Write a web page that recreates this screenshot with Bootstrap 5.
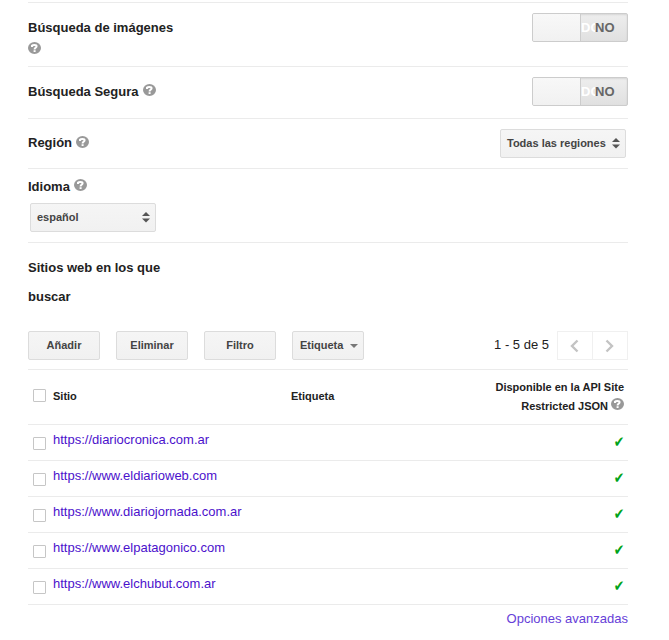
<!DOCTYPE html>
<html lang="es">
<head>
<meta charset="utf-8">
<meta name="viewport" content="width=device-width, initial-scale=1">
<title>Configuración del buscador</title>
<link href="https://cdn.jsdelivr.net/npm/bootstrap@5.3.0/dist/css/bootstrap.min.css" rel="stylesheet">
<style>
body{font-family:"Liberation Sans",Arial,sans-serif;font-size:13px;line-height:20px;color:#222;background:#fff;overflow:hidden}
.panel{width:600px;margin-left:28px;padding-top:2px}
.line{border-top:1px solid #ebebeb}
.s1{height:64px}.s2{height:52px}.s3{height:50px}.s4{height:74px}.s5{height:127px}.thead-row{height:55px;font-size:11px;font-weight:700}.site{height:36px}
.help{width:13px;height:12px;display:block;flex:none}
.s1 .help{margin-top:4px}.s2 .help{margin-top:17px}.s3 .help{margin-top:17px}.s4 .help{margin-top:2px}
.lbl{font-weight:700;white-space:nowrap}
.s1 .lbl{padding-top:15px}.s2 .lbl{padding-top:15px}.s3 .lbl{padding-top:14px}
.switch{width:96px;height:29px;border:1px solid #ccc;border-radius:2px;background:linear-gradient(#eee,#e0e0e0);box-shadow:inset 0 1px 2px rgba(0,0,0,.1);font-weight:700;line-height:28px;margin-top:10px;overflow:hidden}
.knob{width:48px;border-right:1px solid #ccc;background:linear-gradient(#f8f8f8,#f1f1f1);flex:none}
.hid{color:#fff;width:14px;overflow:hidden;white-space:nowrap;flex:none}
.off{color:#666}
.gbtn{height:29px;border:1px solid #dcdcdc;border-radius:2px;background:linear-gradient(#f5f5f5,#f1f1f1);color:#444;font-size:11px;font-weight:700;line-height:27px;padding:0;width:72px}
.gbtn:hover{color:#444;background:#f1f1f1;border-color:#dcdcdc}
.caret{margin:1px 5px 0 auto}
.drop{padding-left:7px}
.sel{width:126px;padding:0 5px 0 6px}
.sel svg{margin-bottom:1px}
.s3 .sel{margin:10px 2px 0 0}
.s4 .sel{margin:6px 0 0 2px}
.gap-btn{gap:16px}
.bar{margin-top:20px}
.box{width:13px;height:13px;border:1px solid #c6c6c6;border-radius:1px;background:#fff;flex:none;margin:0 7px 0 5px;appearance:none}
.thead-row .box{margin-top:-1px}
.thead-row .pb-cell{padding-bottom:2px}
.site .box{margin-top:12px}
.site a{color:#4b11cc;text-decoration:none;line-height:15px;margin-top:7px}
.tick{color:#00a31a;font-family:"DejaVu Sans",sans-serif;font-size:12px;line-height:15px;margin:11px 4px 0 0;transform:scale(1.05,1.3)}
.api{line-height:19px;padding:8px 4px 0 0}
.api .help{margin:1px 0 0 3px}
.pg{width:36px;height:29px;border:1px solid #f0f0f0;background:#fff;padding:0 2px 0 0}
.pg+.pg{margin-left:-1px}
.count{line-height:28px}
.adv{color:#6640d8;text-decoration:none;line-height:15px;padding-top:6px}
.c1{width:263px}
.tall{line-height:29px;padding-top:10px}
</style>
<script src="https://cdn.jsdelivr.net/npm/bootstrap@5.3.0/dist/js/bootstrap.bundle.min.js"></script>
</head>
<body>
<svg width="0" height="0" class="position-absolute"><defs>
<symbol id="q" viewBox="0 0 13 12"><ellipse cx="6.5" cy="6" rx="6.5" ry="6" fill="#999"/><path d="M4 4.9V3.7Q4.6 2.9 6.5 2.9Q8.6 2.9 8.6 4.3Q8.6 5.2 7.5 5.8Q6.6 6.3 6.6 7.5" fill="none" stroke="#fff" stroke-width="2"/><path d="M5.6 8.2h2v1.8h-2z" fill="#fff"/></symbol>
<symbol id="ud" viewBox="0 0 8 12"><path d="M0 5 4 1 8 5zM0 7.5h8L4 11.5z" fill="#555"/></symbol>
</defs></svg>
<main class="panel">
<section class="line s1 d-flex justify-content-between">
 <div><div class="lbl">Búsqueda de imágenes</div><svg class="help"><use href="#q"/></svg></div>
 <div class="switch d-flex"><span class="knob"></span><span class="hid">DO</span><span class="off">NO</span></div>
</section>
<section class="line s2 d-flex justify-content-between">
 <div class="d-flex gap-1"><span class="lbl">Búsqueda Segura</span><svg class="help"><use href="#q"/></svg></div>
 <div class="switch d-flex"><span class="knob"></span><span class="hid">DO</span><span class="off">NO</span></div>
</section>
<section class="line s3 d-flex justify-content-between">
 <div class="d-flex gap-1"><span class="lbl">Región</span><svg class="help"><use href="#q"/></svg></div>
 <button class="btn gbtn sel d-flex align-items-center justify-content-between">Todas las regiones<svg width="8" height="12"><use href="#ud"/></svg></button>
</section>
<section class="line s4">
 <div class="d-flex gap-1 pt-2"><span class="lbl">Idioma</span><svg class="help"><use href="#q"/></svg></div>
 <button class="btn gbtn sel d-flex align-items-center justify-content-between">español<svg width="8" height="12"><use href="#ud"/></svg></button>
</section>
<section class="line s5 d-flex flex-column">
 <div class="lbl tall">Sitios web en los que<br>buscar</div>
 <div class="bar d-flex justify-content-between">
  <div class="d-flex gap-btn"><button class="btn gbtn">Añadir</button><button class="btn gbtn">Eliminar</button><button class="btn gbtn">Filtro</button><button class="btn gbtn d-flex align-items-center drop">Etiqueta<svg width="8" height="4" class="caret"><path d="M0 0h8L4 4z" fill="#777"/></svg></button></div>
  <div class="d-flex"><span class="me-2 count">1 - 5 de 5</span>
  <button class="pg d-flex align-items-center justify-content-center"><svg width="9" height="14" fill="none" stroke="#c3c3c3" stroke-width="2.4"><path d="M7.500 1.500 2 7l5.500 5.500"/></svg></button><button class="pg d-flex align-items-center justify-content-center"><svg width="9" height="14" fill="none" stroke="#c3c3c3" stroke-width="2.4"><path d="M1.500 1.500 7 7l-5.500 5.500"/></svg></button></div>
 </div>
</section>
<section>
 <div class="line thead-row d-flex">
  <div class="c1 d-flex align-items-center pb-cell"><input type="checkbox" class="box">Sitio</div>
  <div class="d-flex align-items-center pb-cell">Etiqueta</div>
  <div class="ms-auto text-end api">Disponible en la API Site<div class="d-flex justify-content-end"><span>Restricted JSON</span><svg class="help"><use href="#q"/></svg></div></div>
 </div>
 <div class="line site d-flex"><input type="checkbox" class="box"><a href="#">https://diariocronica.com.ar</a><span class="tick ms-auto">✔</span></div>
 <div class="line site d-flex"><input type="checkbox" class="box"><a href="#">https://www.eldiarioweb.com</a><span class="tick ms-auto">✔</span></div>
 <div class="line site d-flex"><input type="checkbox" class="box"><a href="#">https://www.diariojornada.com.ar</a><span class="tick ms-auto">✔</span></div>
 <div class="line site d-flex"><input type="checkbox" class="box"><a href="#">https://www.elpatagonico.com</a><span class="tick ms-auto">✔</span></div>
 <div class="line site d-flex"><input type="checkbox" class="box"><a href="#">https://www.elchubut.com.ar</a><span class="tick ms-auto">✔</span></div>
</section>
<div class="line d-flex justify-content-end"><a class="adv" href="#">Opciones avanzadas</a></div>
</main>
</body>
</html>
